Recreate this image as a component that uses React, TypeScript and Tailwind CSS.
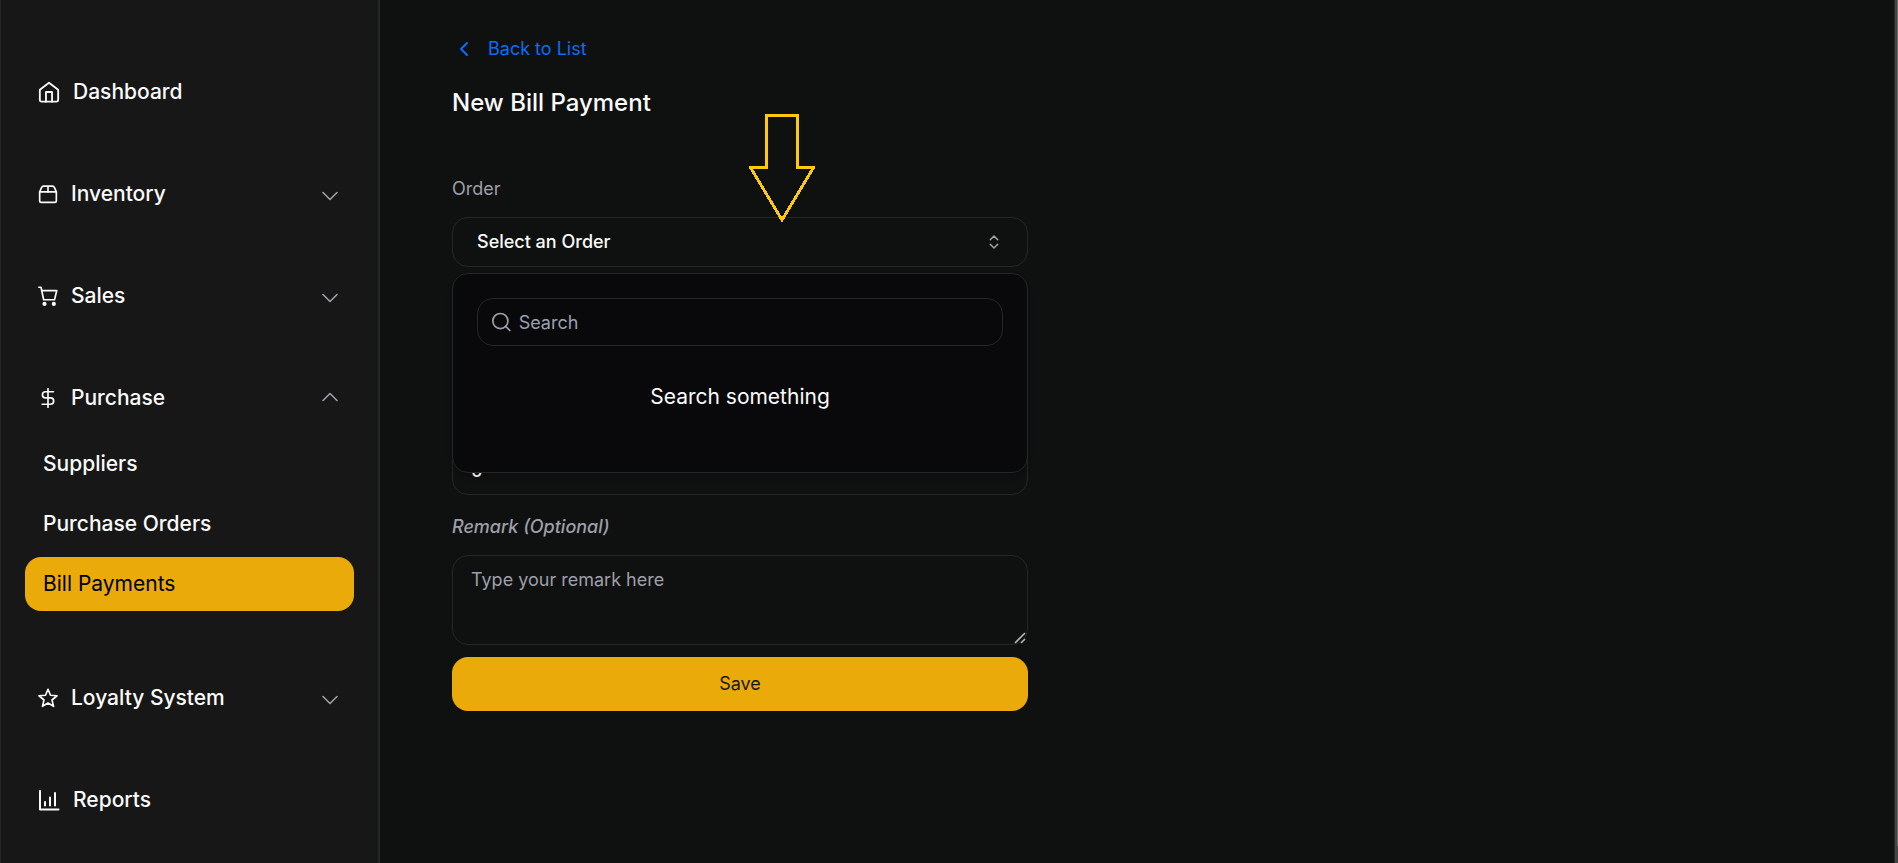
import React from 'react';
import { ChevronDown, ChevronLeft, ChevronsUpDown, ChevronUp, Search } from 'lucide-react';

type IconProps = { className?: string };

const iconProps = {
  xmlns: 'http://www.w3.org/2000/svg',
  fill: 'none',
  viewBox: '0 0 24 24',
  stroke: 'currentColor',
  strokeWidth: 2,
  strokeLinecap: 'round' as const,
  strokeLinejoin: 'round' as const,
};

const HomeIcon = ({ className }: IconProps) => (
  <svg {...iconProps} className={className}>
    <path d="M2 9.5 12 1.8 22 9.5V20.5a2 2 0 0 1-2 2H4a2 2 0 0 1-2-2z" />
    <path d="M8.7 22.5V12h6.6v10.5" />
  </svg>
);

const BoxIcon = ({ className }: IconProps) => (
  <svg {...iconProps} className={className}>
    <path d="M2 9.5h20V20a2 2 0 0 1-2 2H4a2 2 0 0 1-2-2z" />
    <path d="M2 9.5 4.4 4a2.5 2.5 0 0 1 2.3-1.5h10.6A2.5 2.5 0 0 1 19.6 4L22 9.5M12 2.5v7" />
  </svg>
);

const CartIcon = ({ className }: IconProps) => (
  <svg {...iconProps} className={className}>
    <path d="M1 1.5h2.6l3.2 15h13l2.7-11H4.6" />
    <circle cx="7.8" cy="21.5" r="1.5" fill="currentColor" />
    <circle cx="19" cy="21.5" r="1.5" fill="currentColor" />
  </svg>
);

const DollarIcon = ({ className }: IconProps) => (
  <svg {...iconProps} className={className}>
    <path d="M12 .8v22.4M18.5 4.5H9a3.7 3.7 0 0 0 0 7.4h6a3.8 3.8 0 0 1 0 7.6H5" />
  </svg>
);

const StarIcon = ({ className }: IconProps) => (
  <svg {...iconProps} className={className}>
    <path d="m12 1.5 3 7.2 7.8.6-6 5.1 1.9 7.6-6.7-4.1L5.3 22l1.9-7.6-6-5.1 7.8-.6z" />
  </svg>
);

const ChartIcon = ({ className }: IconProps) => (
  <svg {...iconProps} className={className}>
    <path d="M3 3v18.500h18.500M8 14v3.500M13 9.500v8M18 5v12.500" />
  </svg>
);

type NavLinkProps = {
  label: string;
  icon: React.ReactNode;
};

const NavLink = ({ label, icon }: NavLinkProps) => (
  <a href="#" className="flex h-[54px] items-center gap-3 px-3">
    {icon}
    {label}
  </a>
);

type NavGroupProps = NavLinkProps & {
  isOpen?: boolean;
  children?: React.ReactNode;
};

const NavGroup = ({ label, icon, isOpen = false, children }: NavGroupProps) => (
  <div>
    <button
      type="button"
      aria-expanded={isOpen}
      className="flex h-[54px] w-full items-center gap-3 pr-2.5 pl-3"
    >
      {icon}
      <span className="flex-1 text-left">{label}</span>
      {isOpen ? (
        <ChevronUp className="mb-0.5 size-7 text-zinc-400" strokeWidth={1.4} />
      ) : (
        <ChevronDown className="mt-1 size-7 text-zinc-400" strokeWidth={1.4} />
      )}
    </button>
    {isOpen && <div className="flex flex-col gap-1.5 py-3">{children}</div>}
  </div>
);

const Sidebar = () => (
  <aside className="w-[380px] shrink-0 border-r-2 border-l border-[#262626] bg-[#171717] px-6 pt-[65px] text-[21px] font-medium text-neutral-50">
    <nav className="flex flex-col gap-12">
      <NavLink label="Dashboard" icon={<HomeIcon className="size-6 p-px" />} />
      <NavGroup label="Inventory" icon={<BoxIcon className="size-[22px] p-px" />} />
      <NavGroup label="Sales" icon={<CartIcon className="size-[22px] p-px" />} />
      <NavGroup label="Purchase" icon={<DollarIcon className="size-[22px] p-px" />} isOpen>
        <a href="#" className="flex h-[54px] items-center px-[18px]">
          Suppliers
        </a>
        <a href="#" className="flex h-[54px] items-center px-[18px]">
          Purchase Orders
        </a>
        <a
          href="#"
          aria-current="page"
          className="flex h-[54px] items-center rounded-2xl bg-[#eaab0a] px-[18px] font-normal text-black"
        >
          Bill Payments
        </a>
      </NavGroup>
      <NavGroup label="Loyalty System" icon={<StarIcon className="size-[22px] p-px" />} />
      <NavLink label="Reports" icon={<ChartIcon className="size-6" />} />
    </nav>
  </aside>
);

const ArrowMarker = () => (
  <svg
    viewBox="0 0 66 108"
    fill="none"
    stroke="#ffc90e"
    strokeWidth="3"
    shapeRendering="crispEdges"
    aria-hidden="true"
    className="pointer-events-none absolute bottom-full left-[297px] z-20 -mb-[5px] h-[108px] w-[66px]"
  >
    <path d="M17.5 1.5h31v52h16L33 106 1.5 53.500h16z" />
  </svg>
);

const OrderSelect = () => (
  <div className="relative">
    <ArrowMarker />
    <button
      type="button"
      id="order"
      aria-expanded="true"
      className="flex h-[50px] w-full items-center justify-between rounded-2xl border border-[#262626] px-6 font-medium"
    >
      Select an Order
      <ChevronsUpDown className="size-[18px] text-neutral-400" />
    </button>
    <div className="absolute inset-x-0 top-full z-10 mt-1.5 h-[200px] rounded-2xl border border-[#262626] bg-[#09090b] p-6 shadow-md">
      <label className="flex h-12 items-center gap-1.5 rounded-2xl border border-[#262626] px-3">
        <Search className="size-6 text-zinc-400" strokeWidth={1.8} />
        <input
          type="text"
          aria-label="Search"
          placeholder="Search"
          className="w-full bg-transparent pt-0.5 outline-none placeholder:text-gray-400"
        />
      </label>
      <p className="mt-[37px] text-center text-[21px]">Search something</p>
    </div>
  </div>
);

const RemarkField = () => (
  <div className="relative flex">
    <textarea
      id="remark"
      placeholder="Type your remark here"
      className="h-[90px] w-full rounded-2xl border border-[#262626] bg-transparent px-[18px] py-2.5 outline-none placeholder:text-zinc-400 [&::-webkit-resizer]:bg-transparent"
    />
    <svg
      viewBox="0 0 12 12"
      fill="none"
      stroke="#b5b5b5"
      strokeWidth="1.6"
      aria-hidden="true"
      className="pointer-events-none absolute right-0.5 bottom-px size-3"
    >
      <path d="m1 11L11 1M7 11l4-4" />
    </svg>
  </div>
);

const BillPaymentForm = () => (
  <form className="mt-14 flex w-full max-w-xl flex-col">
    <label htmlFor="order" className="mb-3.5 text-zinc-400">
      Order
    </label>
    <OrderSelect />
    <input
      type="text"
      aria-label="Amount"
      defaultValue="0"
      className="mt-[174px] h-[54px] rounded-2xl border border-[#262626] bg-transparent px-[18px] pt-1 font-medium outline-none"
    />
    <label htmlFor="remark" className="mt-[18px] mb-3.5 font-medium text-zinc-400 italic">
      Remark (Optional)
    </label>
    <RemarkField />
    <button type="submit" className="mt-3 h-[54px] rounded-2xl bg-[#eaab0a] text-[#171717]">
      Save
    </button>
  </form>
);

const App = () => (
  <div className="flex h-screen overflow-hidden bg-[#0f1110] font-['Inter',sans-serif] text-[18px] leading-7 text-neutral-50">
    <Sidebar />
    <main className="min-w-0 flex-1 border-r border-[#262626] px-18 pt-[35px]">
      <a href="#" className="flex items-center gap-3 text-[#0a6cff]">
        <ChevronLeft className="size-6" />
        Back to List
      </a>
      <h1 className="mt-6 text-2xl font-medium">New Bill Payment</h1>
      <BillPaymentForm />
    </main>
    <div className="w-[3px] shrink-0 bg-[#454545] pl-0.5">
      <div className="h-[98%] bg-[#6b6b6b]" />
    </div>
  </div>
);

export default App;
